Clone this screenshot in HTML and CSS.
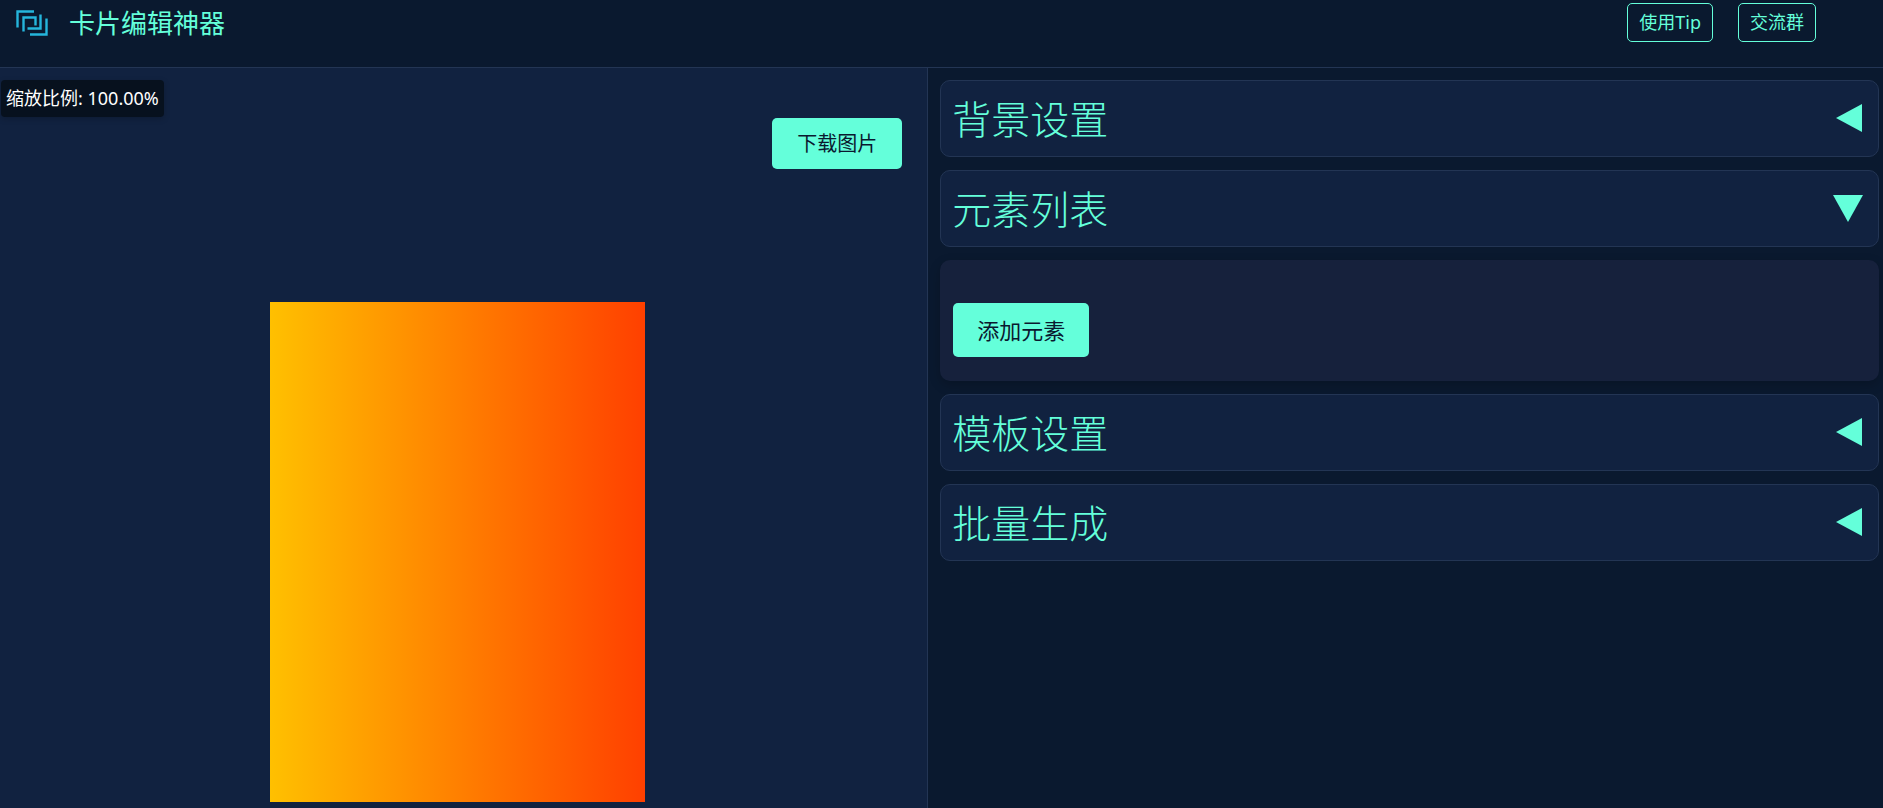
FILE: index.html
```html
<!DOCTYPE html>
<html lang="zh-CN">
<head>
<meta charset="utf-8">
<meta name="viewport" content="width=device-width, initial-scale=1">
<title>卡片编辑神器</title>
<link rel="stylesheet" href="styles.css">
</head>
<body>
<header class="header">
  <div class="brand">
    <svg class="logo" viewBox="0 0 32 26" aria-hidden="true">
      <path d="M1.500 17.500V1.500H18M7.500 21.500V7.500H19.500V15.500M24.500 4.500V18.500H11.500M30.500 8.500V24.500H14"/>
    </svg>
    <h1 class="title">卡片编辑神器</h1>
  </div>
  <nav class="actions">
    <button class="outline-button" type="button">使用Tip</button>
    <button class="outline-button" type="button">交流群</button>
  </nav>
</header>
<main class="workspace">
  <section class="preview">
    <div class="zoom-badge">缩放比例: 100.00%</div>
    <button class="button download" type="button">下载图片</button>
    <div class="card"></div>
  </section>
  <section class="settings">
    <button class="section-header" type="button" aria-expanded="false">
      <span>背景设置</span>
      <svg class="arrow" viewBox="0 0 30 30" aria-hidden="true"><path d="M3 14L29 0V28Z"/></svg>
    </button>
    <button class="section-header" type="button" aria-expanded="true">
      <span>元素列表</span>
      <svg class="arrow" viewBox="0 0 30 30" aria-hidden="true"><path d="M0 1H30L15 28Z"/></svg>
    </button>
    <div class="section-body">
      <button class="button add" type="button">添加元素</button>
    </div>
    <button class="section-header" type="button" aria-expanded="false">
      <span>模板设置</span>
      <svg class="arrow" viewBox="0 0 30 30" aria-hidden="true"><path d="M3 14L29 0V28Z"/></svg>
    </button>
    <button class="section-header" type="button" aria-expanded="false">
      <span>批量生成</span>
      <svg class="arrow" viewBox="0 0 30 30" aria-hidden="true"><path d="M3 14L29 0V28Z"/></svg>
    </button>
  </section>
</main>
</body>
</html>
```
FILE: styles.css
```css
:root {
  --bg: #0a192f;
  --panel: #112240;
  --line: #233554;
  --accent: #64ffda;
}

* {
  box-sizing: border-box;
}

body {
  display: flex;
  flex-direction: column;
  min-height: 100vh;
  margin: 0;
  background: var(--bg);
  color: var(--accent);
  font-family: "Noto Sans", "Noto Sans CJK SC", sans-serif;
}

button {
  font: inherit;
  cursor: pointer;
}

.header {
  display: flex;
  justify-content: space-between;
  align-items: flex-start;
  padding: 3px 67px 24px 16px;
  border-bottom: 1px solid var(--line);
}

.brand {
  display: flex;
  align-items: center;
  gap: 21px;
}

.logo {
  width: 32px;
  height: 26px;
  fill: none;
  stroke: #25b5dc;
  stroke-width: 2.4;
}

.title {
  margin: 0;
  font-size: 26px;
  font-weight: 400;
  line-height: 40px;
}

.actions {
  display: flex;
  gap: 25px;
}

.outline-button {
  padding: 0 11px;
  border: 1px solid var(--accent);
  border-radius: 5px;
  background: transparent;
  color: var(--accent);
  font-size: 18px;
  line-height: 37px;
}

.workspace {
  display: grid;
  grid-template-columns: 49.3% 1fr;
  flex: 1;
}

.preview {
  position: relative;
  display: flex;
  flex-direction: column;
  align-items: center;
  justify-content: flex-end;
  padding: 50px 12px 6px 0;
  background: var(--panel);
  border-right: 1px solid var(--line);
}

.zoom-badge {
  position: absolute;
  top: 12px;
  left: 1px;
  padding: 0 5px;
  border-radius: 4px;
  background: #07111e;
  box-shadow: 0 2px 6px rgba(0, 0, 0, 0.2);
  color: #fff;
  font-size: 18px;
  line-height: 37px;
}

.button {
  padding: 0 24px;
  border: 0;
  border-radius: 5px;
  background: var(--accent);
  color: var(--bg);
}

.download {
  position: absolute;
  top: 50px;
  right: 25px;
  padding: 0 25px;
  font-size: 20px;
  line-height: 51px;
}

.card {
  width: 375px;
  max-width: 100%;
  aspect-ratio: 3 / 4;
  background: linear-gradient(90deg, #ffc000, #ff4000);
}

.settings {
  display: flex;
  flex-direction: column;
  gap: 13px;
  padding: 12px 4px 12px 12px;
}

.section-header {
  display: flex;
  align-items: center;
  justify-content: space-between;
  padding: 0 15px 0 11px;
  border: 1px solid var(--line);
  border-radius: 10px;
  background: var(--panel);
  color: var(--accent);
  font-size: 39px;
  font-weight: 300;
  line-height: 75px;
  text-align: left;
}

.arrow {
  width: 30px;
  height: 30px;
  fill: var(--accent);
}

.section-body {
  padding: 43px 13px 24px;
  border-radius: 10px;
  background: #16213c;
  box-shadow: 0 4px 12px rgba(0, 0, 0, 0.2);
}

.add {
  font-size: 22px;
  line-height: 54px;
}
```
